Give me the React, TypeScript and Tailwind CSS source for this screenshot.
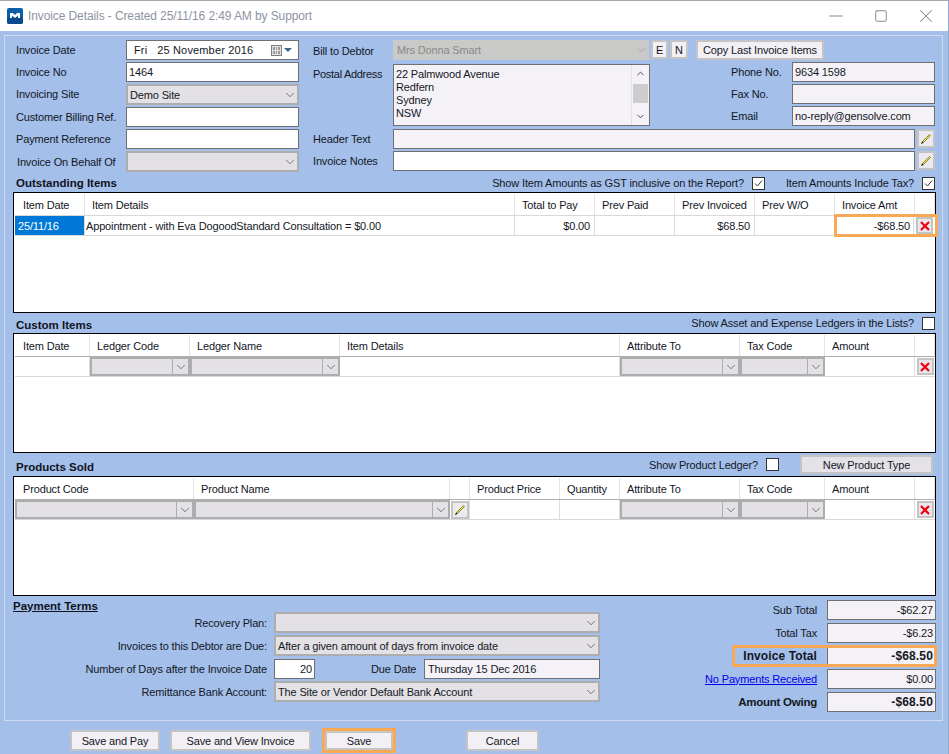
import { ChevronDown, Minus, Square, X } from "lucide-react";
import type { ReactNode } from "react";

const inputBase = "border border-[#707070] px-[2px] flex items-center whitespace-nowrap overflow-hidden";

function Label({ children, className = "" }: { children: ReactNode; className?: string }) {
  return <div className={`flex items-center whitespace-nowrap ${className}`}>{children}</div>;
}

function Chevron({ color = "#3c3c3c" }: { color?: string }) {
  return <ChevronDown size={14} strokeWidth={1.1} color={color} />;
}

// windows style combo box, the grey flat kind
function Combo({ value = "", className = "" }: { value?: string; className?: string }) {
  return (
    <div className={`flex items-center justify-between border-2 border-[#adadad] bg-[#e3e1e5] pl-[2px] whitespace-nowrap ${className}`}>
      <span>{value}</span>
      <Chevron />
    </div>
  );
}

function GridCombo() {
  return (
    <div className="flex h-full w-full items-center justify-end border-2 border-[#adadad] bg-[#e3e1e5]">
      <div className="flex h-full w-[16px] items-center justify-center border-l border-[#adadad]">
        <Chevron />
      </div>
    </div>
  );
}

function Pencil() {
  return (
    <svg width="12" height="12" viewBox="0 0 12 12">
      <path d="M1.5 10.5 L2.5 8.5 L9.5 1.5 L10.5 2.5 L3.5 9.5 Z" fill="#f5e51b" stroke="#2a2a10" strokeWidth="0.5" />
      <path d="M1 11 L2.5 8.5 L3.5 9.5 Z" fill="#111" />
    </svg>
  );
}

function PencilButton({ className = "" }: { className?: string }) {
  return (
    <div className={`flex items-center justify-center border-2 border-[#c4c4c4] bg-[#eceaef] ${className}`}>
      <Pencil />
    </div>
  );
}

function DeleteButton() {
  return (
    <div className="flex h-[17px] w-[17px] items-center justify-center border-2 border-[#c4c4c4] bg-[#e9e7eb]">
      <svg width="10" height="10" viewBox="0 0 10 10">
        <path d="M1 1 L9 9 M9 1 L1 9" fill="none" stroke="#f00010" strokeWidth="2.2" />
      </svg>
    </div>
  );
}

function CheckBox({ checked = false }: { checked?: boolean }) {
  return (
    <div className="flex h-[13px] w-[13px] items-center justify-center border border-[#333] bg-white">
      {checked && (
        <svg width="11" height="11" viewBox="0 0 11 11">
          <path d="M2 5.5 L4.5 8 L9 2.5" fill="none" stroke="#333" strokeWidth="1" />
        </svg>
      )}
    </div>
  );
}

function Btn({ children, className = "" }: { children: ReactNode; className?: string }) {
  return (
    <div className={`flex items-center justify-center whitespace-nowrap border-2 border-[#c4c4c4] bg-[#f2f0f5] ${className}`}>
      {children}
    </div>
  );
}

function HeadCell({ children }: { children?: ReactNode }) {
  return <div className="flex h-[21px] items-center border-r border-[#e3e3e3] pl-[7px] whitespace-nowrap first:pl-[8px]">{children}</div>;
}

function Cell({ children, className = "" }: { children?: ReactNode; className?: string }) {
  return <div className={`flex h-full items-center border-r border-[#dcdcdc] whitespace-nowrap ${className}`}>{children}</div>;
}

function SectionHead({ title, children, className = "" }: { title: string; children?: ReactNode; className?: string }) {
  return (
    <div className={`flex items-end justify-between pl-[3px] ${className}`}>
      <span className="text-[11.5px] font-bold tracking-normal text-[#10131c]">{title}</span>
      {children}
    </div>
  );
}

function TotalRow({ label, value, bold = false, link = false, highlight = false, labelClass = "" }: { label: string; value: string; bold?: boolean; link?: boolean; highlight?: boolean; labelClass?: string }) {
  return (
    <div className="relative flex h-[23px] items-center justify-end">
      <span className={`whitespace-nowrap ${bold ? "font-bold" : ""} ${link ? "text-[#0000ee] underline" : ""} ${labelClass}`}>{label}</span>
      <div className={`ml-[10px] flex h-[20px] w-[109px] shrink-0 items-center justify-end border border-[#707070] bg-[#f4f2f7] pr-[2px] ${bold ? "text-[12px] font-bold tracking-[0.15px]" : ""}`}>
        {value}
      </div>
      {/* orange annotation frame sits over the row */}
      {highlight && <div className="absolute bottom-0 left-[-2px] right-[-1px] top-[1px] border-[3px] border-[#f7a956]" />}
    </div>
  );
}

export default function App() {
  return (
    <div className="flex h-[754px] w-[949px] flex-col overflow-hidden border-r border-[#8ea8d0] bg-[#a3bfea] font-['Liberation_Sans',sans-serif] text-[11px] leading-[14px] tracking-[-0.15px] text-[#14171f]">
      {/* Title bar */}
      <div className="flex h-[31px] shrink-0 items-center justify-between border-t border-[#a8a8a8] bg-white pb-[1px] pl-[7px]">
        <div className="flex items-center gap-[5px]">
          <svg width="16" height="16" viewBox="0 0 16 16">
            <rect width="16" height="16" rx="2" fill="#0b5fa8" />
            <rect y="9" width="16" height="7" rx="2" fill="#0a4a8c" />
            <path d="M3 10 V5 H6 L8 7 L10 5 H13 V10 H11 V7.5 L8 10 L5 7.5 V10 Z" fill="#fff" />
          </svg>
          <span className="text-[12px] tracking-[-0.1px] text-[#8d94a1]">Invoice Details - Created 25/11/16 2:49 AM by Support</span>
        </div>
        <div className="flex items-center text-[#8a8a8a]">
          <span className="flex w-[45px] justify-center"><Minus size={22} strokeWidth={1.1} /></span>
          <span className="flex w-[45px] justify-center"><Square size={14} strokeWidth={1.7} /></span>
          <span className="flex w-[45px] justify-center"><X size={22} strokeWidth={1.1} /></span>
        </div>
      </div>

      {/* Main panel */}
      <div className="ml-[4px] mr-[5px] mt-[4px] flex h-[686px] shrink-0 flex-col border border-[#cfdcef] pl-[8px] pr-[5px] pt-[4px]">
        {/* Top form */}
        <div className="flex">
          <div className="flex w-[286px] shrink-0 flex-col">
            <div className="flex h-[22px]">
              <Label className="h-[20px] w-[113px] pl-[3px]">Invoice Date</Label>
              <div className="flex h-[20px] w-[173px] items-center justify-between border border-[#707070] bg-white pl-[7px] pr-[6px] tracking-[0.15px]">
                <span className="flex gap-[10px]">
                  <span>Fri</span>
                  <span>25 November 2016</span>
                </span>
                <span className="flex items-center gap-[2px]">
                  <span className="grid h-[11px] w-[11px] grid-cols-3 gap-[1px] border border-[#808080] bg-[#e4e4e4] p-[1px]">
                    <span className="bg-[#999]" /><span className="bg-[#999]" /><span className="bg-[#999]" />
                    <span className="bg-[#999]" /><span className="bg-[#999]" /><span className="bg-[#999]" />
                  </span>
                  <span className="h-0 w-0 border-x-[4px] border-t-[4px] border-x-transparent border-t-[#44648c]" />
                </span>
              </div>
            </div>
            <div className="flex h-[22px]">
              <Label className="h-[20px] w-[113px] pl-[3px]">Invoice No</Label>
              <div className={`${inputBase} h-[20px] w-[173px] bg-white`}>1464</div>
            </div>
            <div className="flex h-[23px]">
              <Label className="h-[20px] w-[113px] pl-[3px]">Invoicing Site</Label>
              <Combo value="Demo Site" className="h-[21px] w-[173px]" />
            </div>
            <div className="flex h-[22px]">
              <Label className="h-[20px] w-[113px] pl-[3px]">Customer Billing Ref.</Label>
              <div className={`${inputBase} h-[20px] w-[173px] bg-white`} />
            </div>
            <div className="flex h-[22px]">
              <Label className="h-[20px] w-[113px] pl-[3px]">Payment Reference</Label>
              <div className={`${inputBase} h-[20px] w-[173px] bg-white`} />
            </div>
            <div className="flex h-[21px]">
              <Label className="h-[21px] w-[113px] pl-[4px]">Invoice On Behalf Of</Label>
              <Combo className="h-[21px] w-[173px]" />
            </div>
          </div>

          <div className="ml-[14px] flex flex-1 flex-col">
            <div className="flex">
              <div className="flex w-[338px] shrink-0 flex-col">
                <div className="flex h-[24px]">
                  <Label className="h-[21px] w-[80px]">Bill to Debtor</Label>
                  <div className="flex h-[20px] w-[256px] items-center justify-between bg-[#c9c9c7] pl-[4px] pr-[1px] text-[#8b8b8b]">
                    <span>Mrs Donna Smart</span>
                    <Chevron color="#9a9a9a" />
                  </div>
                </div>
                <div className="flex h-[65px]">
                  <Label className="h-[20px] w-[80px] tracking-[-0.3px]">Postal Address</Label>
                  <div className="flex h-[62px] w-[257px] justify-between border border-[#707070] bg-[#f4f2f7] pl-[2px] pt-[3px] leading-[13px] text-[#14161e]">
                    <div>
                      22 Palmwood Avenue
                      <br />
                      Redfern
                      <br />
                      Sydney
                      <br />
                      NSW
                    </div>
                    <div className="mt-[-3px] flex w-[18px] flex-col items-center justify-between border-l border-[#e3e1e5] py-[3px]">
                      <ChevronDown size={11} strokeWidth={1.6} className="rotate-180" />
                      <div className="mb-[4px] h-[19px] w-[15px] bg-[#cdcdcd]" />
                      <ChevronDown size={11} strokeWidth={1.6} />
                    </div>
                  </div>
                </div>
              </div>
              <div className="flex flex-1 flex-col">
                <div className="flex h-[22px] gap-[2px]">
                  <Btn className="h-[19px] w-[17px]">E</Btn>
                  <Btn className="h-[19px] w-[18px]">N</Btn>
                  <Btn className="ml-[6px] h-[20px] w-[128px]">Copy Last Invoice Items</Btn>
                </div>
                <div className="flex h-[22px] pl-[80px]">
                  <Label className="h-[20px] w-[61px]">Phone No.</Label>
                  <div className={`${inputBase} h-[20px] w-[143px] bg-[#f4f2f7]`}>9634 1598</div>
                </div>
                <div className="flex h-[22px] pl-[80px]">
                  <Label className="h-[20px] w-[61px]">Fax No.</Label>
                  <div className={`${inputBase} h-[20px] w-[143px] bg-[#f4f2f7]`} />
                </div>
                <div className="flex h-[21px] pl-[80px]">
                  <Label className="h-[20px] w-[61px]">Email</Label>
                  <div className={`${inputBase} h-[20px] w-[143px] bg-[#f4f2f7]`}>no-reply@gensolve.com</div>
                </div>
              </div>
            </div>
            <div className="flex h-[22px]">
              <Label className="h-[20px] w-[80px]">Header Text</Label>
              <div className={`${inputBase} h-[20px] w-[522px] bg-[#f4f2f7]`} />
              <PencilButton className="ml-[2px] h-[19px] w-[18px]" />
            </div>
            <div className="flex h-[21px]">
              <Label className="h-[20px] w-[80px]">Invoice Notes</Label>
              <div className={`${inputBase} h-[20px] w-[522px] bg-white`} />
              <PencilButton className="ml-[2px] h-[19px] w-[18px]" />
            </div>
          </div>
        </div>

        {/* Outstanding items */}
        <SectionHead title="Outstanding Items" className="mt-[4px] h-[16px] pb-[2px] pr-[2px]">
          <div className="flex items-center">
            <span>Show Item Amounts as GST inclusive on the Report?</span>
            <span className="ml-[8px]"><CheckBox checked /></span>
            <span className="ml-[21px]">Item Amounts Include Tax?</span>
            <span className="ml-[8px]"><CheckBox checked /></span>
          </div>
        </SectionHead>
        <div className="h-[121px] w-[923px] shrink-0 border border-black bg-white pl-[1px] pt-[1px]">
          <div className="grid grid-cols-[70px_430px_80px_80px_80px_80px_80px_20px] border-b border-[#d8d8d8]">
            <HeadCell>Item Date</HeadCell>
            <HeadCell>Item Details</HeadCell>
            <HeadCell>Total to Pay</HeadCell>
            <HeadCell>Prev Paid</HeadCell>
            <HeadCell>Prev Invoiced</HeadCell>
            <HeadCell>Prev W/O</HeadCell>
            <HeadCell>Invoice Amt</HeadCell>
            <HeadCell />
          </div>
          <div className="grid h-[20px] grid-cols-[70px_430px_80px_80px_80px_80px_100px] border-b border-[#d8d8d8]">
            <Cell className="bg-[#0078d7] pl-[3px] text-white">25/11/16</Cell>
            <Cell className="pl-[1px]">Appointment - with Eva DogoodStandard Consultation = $0.00</Cell>
            <Cell className="justify-end pr-[4px]">$0.00</Cell>
            <Cell />
            <Cell className="justify-end pr-[4px]">$68.50</Cell>
            <Cell />
            {/* highlighted amount and delete button share one orange frame */}
            <div className="relative z-10 my-[1px] ml-[2px] flex h-[17px] bg-white outline-[3px] outline-[#f7a956]">
              <div className="flex flex-1 items-center justify-end border-r border-[#dcdcdc] pr-[3px]">-$68.50</div>
              <div className="flex w-[21px] items-center justify-center">
                <DeleteButton />
              </div>
            </div>
          </div>
        </div>

        {/* Custom items */}
        <SectionHead title="Custom Items" className="mt-[2px] h-[18px] pb-[1px] pr-[2px]">
          <div className="mb-[2px] flex items-center">
            <span>Show Asset and Expense Ledgers in the Lists?</span>
            <span className="ml-[8px]"><CheckBox /></span>
          </div>
        </SectionHead>
        <div className="h-[120px] w-[923px] shrink-0 border border-black bg-white pl-[1px] pt-[1px]">
          <div className="grid grid-cols-[75px_100px_150px_280px_120px_85px_90px_20px] border-b border-[#adadad]">
            <HeadCell>Item Date</HeadCell>
            <HeadCell>Ledger Code</HeadCell>
            <HeadCell>Ledger Name</HeadCell>
            <HeadCell>Item Details</HeadCell>
            <HeadCell>Attribute To</HeadCell>
            <HeadCell>Tax Code</HeadCell>
            <HeadCell>Amount</HeadCell>
            <HeadCell />
          </div>
          <div className="grid h-[20px] grid-cols-[75px_100px_150px_280px_120px_85px_90px_20px] border-b border-[#d8d8d8]">
            <Cell />
            <GridCombo />
            <GridCombo />
            <Cell />
            <GridCombo />
            <GridCombo />
            <Cell />
            <Cell className="justify-center !border-r-0"><DeleteButton /></Cell>
          </div>
        </div>

        {/* Products sold */}
        <SectionHead title="Products Sold" className="mt-[2px] h-[21px] pb-[2px] pr-[4px]">
          <div className="flex items-center">
            <span>Show Product Ledger?</span>
            <span className="ml-[8px]"><CheckBox /></span>
            <Btn className="ml-[21px] h-[19px] w-[133px] !bg-[#e4e2e6]">New Product Type</Btn>
          </div>
        </SectionHead>
        <div className="h-[120px] w-[923px] shrink-0 border border-black bg-white pl-[1px] pt-[1px]">
          <div className="grid grid-cols-[179px_256px_20px_90px_60px_120px_85px_90px_20px] border-b border-[#adadad]">
            <HeadCell>Product Code</HeadCell>
            <HeadCell>Product Name</HeadCell>
            <HeadCell />
            <HeadCell>Product Price</HeadCell>
            <HeadCell>Quantity</HeadCell>
            <HeadCell>Attribute To</HeadCell>
            <HeadCell>Tax Code</HeadCell>
            <HeadCell>Amount</HeadCell>
            <HeadCell />
          </div>
          <div className="grid h-[20px] grid-cols-[179px_256px_20px_90px_60px_120px_85px_90px_20px] border-b border-[#d8d8d8]">
            <GridCombo />
            <GridCombo />
            <Cell className="justify-center"><PencilButton className="h-[18px] w-[18px]" /></Cell>
            <Cell />
            <Cell />
            <GridCombo />
            <GridCombo />
            <Cell />
            <Cell className="justify-center !border-r-0"><DeleteButton /></Cell>
          </div>
        </div>

        {/* Payment terms and totals */}
        <div className="flex justify-between">
          <div className="flex w-[588px] flex-col whitespace-nowrap pt-[3px]">
            <span className="text-[11.5px] font-bold tracking-normal text-[#10131c] underline">Payment Terms</span>
            <div className="mt-[-2px] flex h-[23px] items-center">
              <span className="w-[254px] text-right">Recovery Plan:</span>
              <Combo className="ml-[7px] h-[21px] w-[326px]" />
            </div>
            <div className="flex h-[23px] items-center">
              <span className="w-[254px] text-right">Invoices to this Debtor are Due:</span>
              <Combo value="After a given amount of days from invoice date" className="ml-[7px] h-[21px] w-[326px]" />
            </div>
            <div className="flex h-[23px] items-center">
              <span className="w-[254px] text-right">Number of Days after the Invoice Date</span>
              <div className="ml-[7px] flex h-[20px] w-[41px] items-center justify-end border border-[#707070] bg-white pr-[2px]">20</div>
              <span className="ml-[56px] w-[45px] shrink-0">Due Date</span>
              <div className="ml-[8px] flex h-[20px] w-[176px] items-center border border-[#707070] bg-[#f4f2f7] pl-[3px]">Thursday 15 Dec 2016</div>
            </div>
            <div className="flex h-[23px] items-center">
              <span className="w-[254px] text-right">Remittance Bank Account:</span>
              <Combo value="The Site or Vendor Default Bank Account" className="ml-[7px] h-[21px] w-[326px]" />
            </div>
          </div>
          <div className="flex w-[203px] flex-col pt-[2px] pr-[1px]">
            <TotalRow label="Sub Total" value="-$62.27" />
            <TotalRow label="Total Tax" value="-$6.23" />
            <TotalRow label="Invoice Total" value="-$68.50" bold highlight labelClass="text-[12px] tracking-[0.1px]" />
            <TotalRow label="No Payments Received" value="$0.00" link />
            <TotalRow label="Amount Owing" value="-$68.50" bold labelClass="text-[11.5px] tracking-[-0.25px]" />
          </div>
        </div>
      </div>

      {/* Bottom buttons */}
      <div className="mt-[9px] flex items-center pl-[70px]">
        <Btn className="h-[21px] w-[90px]">Save and Pay</Btn>
        <Btn className="ml-[10px] h-[21px] w-[141px]">Save and View Invoice</Btn>
        <Btn className="ml-[14px] h-[19px] w-[68px] outline-[3px] outline-[#f7a956]">Save</Btn>
        <Btn className="ml-[73px] h-[21px] w-[73px]">Cancel</Btn>
      </div>
    </div>
  );
}
